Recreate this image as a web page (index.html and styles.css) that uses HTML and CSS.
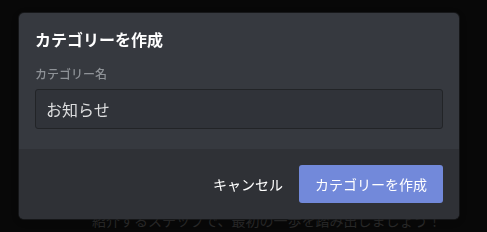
FILE: index.html
```html
<!DOCTYPE html>
<html lang="ja">
<head>
  <meta charset="UTF-8"/>
  <meta name="viewport" content="width=device-width,initial-scale=1.0"/>
  <title>カテゴリーを作成</title>
  <link rel="stylesheet" href="styles.css">
</head>
<body>

  <div class="page">
    <p class="page-text">紹介するステップで、最初の一歩を踏み出しましょう！</p>
  </div>

  <div class="backdrop"></div>

  <form class="modal" role="dialog" aria-modal="true">
    <div class="modal-body">
      <h2>カテゴリーを作成</h2>
      <label class="field-label" for="category-name">カテゴリー名</label>
      <input id="category-name" class="text-input" type="text" value="お知らせ"/>
    </div>
    <div class="modal-footer">
      <button type="button" class="link-btn">キャンセル</button>
      <button type="submit" class="primary-btn">カテゴリーを作成</button>
    </div>
  </form>

</body>
</html>
```

FILE: styles.css
```css
:root {
  --page-bg:    #0a0a0a;
  --modal-bg:   #36393f;
  --footer-bg:  #2f3136;
  --input-bg:   #303339;
  --input-line: #222427;
  --fg:         #ffffff;
  --text:       #dcddde;
  --muted:      #8e9297;
  --blurple:    #7289da;
}
*,*::before,*::after { box-sizing:border-box; margin:0; padding:0 }
body {
  background: var(--page-bg);
  color: var(--fg);
  font-family: "Noto Sans CJK JP", "Noto Sans", sans-serif;
  overflow: hidden;
}
.page {
  padding: 210px 0 0 92px;
}
.page-text {
  font-size: 14px;
  line-height: 20px;
  color: #333333;
  white-space: nowrap;
}
.backdrop {
  position: fixed; inset: 0;
  background: rgba(0,0,0,0.2);
}
.modal {
  position: fixed; top: 13px; left: 19px;
  width: 440px;
  background: var(--modal-bg);
  border-radius: 5px;
  overflow: hidden;
  box-shadow: 0 0 0 1px rgba(32,34,37,0.6), 0 2px 10px rgba(0,0,0,0.2);
}
.modal-body {
  padding: 16px 16px 20px;
  display: flex;
  flex-direction: column;
}
.modal-body h2 {
  font-size: 16px;
  font-weight: 700;
  line-height: 20px;
  color: var(--fg);
}
.field-label {
  margin-top: 17px;
  font-size: 12px;
  font-weight: 500;
  line-height: 16px;
  color: var(--muted);
}
.text-input {
  margin-top: 7px;
  height: 40px;
  padding: 0 10px;
  background: var(--input-bg);
  border: 1px solid var(--input-line);
  border-radius: 3px;
  color: var(--text);
  font: inherit;
  font-size: 16px;
  outline: none;
}
.modal-footer {
  background: var(--footer-bg);
  padding: 16px;
  display: flex;
  justify-content: flex-end;
}
.link-btn, .primary-btn {
  height: 38px;
  padding: 0 16px;
  border: none;
  border-radius: 3px;
  font: inherit;
  font-size: 14px;
  color: var(--fg);
  cursor: pointer;
}
.link-btn {
  background: none;
}
.primary-btn {
  background: var(--blurple);
}
```
